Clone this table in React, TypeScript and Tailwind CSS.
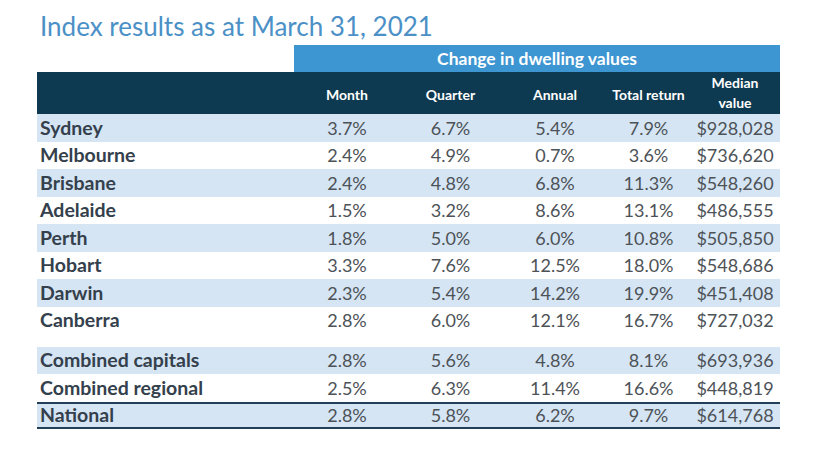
const rows = [
  ['Sydney', '3.7%', '6.7%', '5.4%', '7.9%', '$928,028'],
  ['Melbourne', '2.4%', '4.9%', '0.7%', '3.6%', '$736,620'],
  ['Brisbane', '2.4%', '4.8%', '6.8%', '11.3%', '$548,260'],
  ['Adelaide', '1.5%', '3.2%', '8.6%', '13.1%', '$486,555'],
  ['Perth', '1.8%', '5.0%', '6.0%', '10.8%', '$505,850'],
  ['Hobart', '3.3%', '7.6%', '12.5%', '18.0%', '$548,686'],
  ['Darwin', '2.3%', '5.4%', '14.2%', '19.9%', '$451,408'],
  ['Canberra', '2.8%', '6.0%', '12.1%', '16.7%', '$727,032'],
];

const combined = [
  ['Combined capitals', '2.8%', '5.6%', '4.8%', '8.1%', '$693,936'],
  ['Combined regional', '2.5%', '6.3%', '11.4%', '16.6%', '$448,819'],
];

const national = ['National', '2.8%', '5.8%', '6.2%', '9.7%', '$614,768'];

function Row({ cells, shaded, ruled }: { cells: string[]; shaded: boolean; ruled?: boolean }) {
  return (
    <div
      className={`grid grid-cols-[259px_102px_105px_104px_83px_90px] h-[27.5px] items-center ${shaded ? 'bg-[#d5e5f4]' : 'bg-white'} ${ruled ? 'border-y-2 border-[#233f58]' : ''}`}
    >
      <div className="pl-[3px] font-bold text-[19.5px] leading-[22px] text-[#34404c]">{cells[0]}</div>
      {cells.slice(1).map((c, i) => (
        <div key={i} className="text-center text-[18px] leading-[22px] text-[#4d5257]">{c}</div>
      ))}
    </div>
  );
}

export default function App() {
  return (
    <div className="w-[828px] h-[460px] bg-white font-['Lato',sans-serif]">
      <h1 className="pl-[40px] pt-[8px] text-[26px] leading-[36px] text-[#4b90c6]">
        Index results as at March 31, 2021
      </h1>

      <div className="ml-[37px] mt-[1px] w-[743px]">
        <div className="flex">
          <div className="w-[257px]" />
          <div className="flex-1 h-[27px] bg-[#3d95d2] text-white font-bold text-[17.5px] text-center leading-[27px]">
            Change in dwelling values
          </div>
        </div>

        <div className="grid grid-cols-[259px_102px_105px_104px_83px_90px] h-[42px] items-center bg-[#0d3a50] text-white font-bold text-[14px]">
          <div />
          <div className="text-center pt-[3px]">Month</div>
          <div className="text-center pt-[3px]">Quarter</div>
          <div className="text-center pt-[3px]">Annual</div>
          <div className="text-center pt-[3px]">Total return</div>
          <div className="text-center leading-[20px]">
            Median
            <br />
            value
          </div>
        </div>

        {rows.map((r, i) => (
          <Row key={r[0]} cells={r} shaded={i % 2 === 0} />
        ))}

        <div className="h-[12.5px]" />

        {combined.map((r, i) => (
          <Row key={r[0]} cells={r} shaded={i % 2 === 0} />
        ))}

        <Row cells={national} shaded ruled />
      </div>
    </div>
  );
}
